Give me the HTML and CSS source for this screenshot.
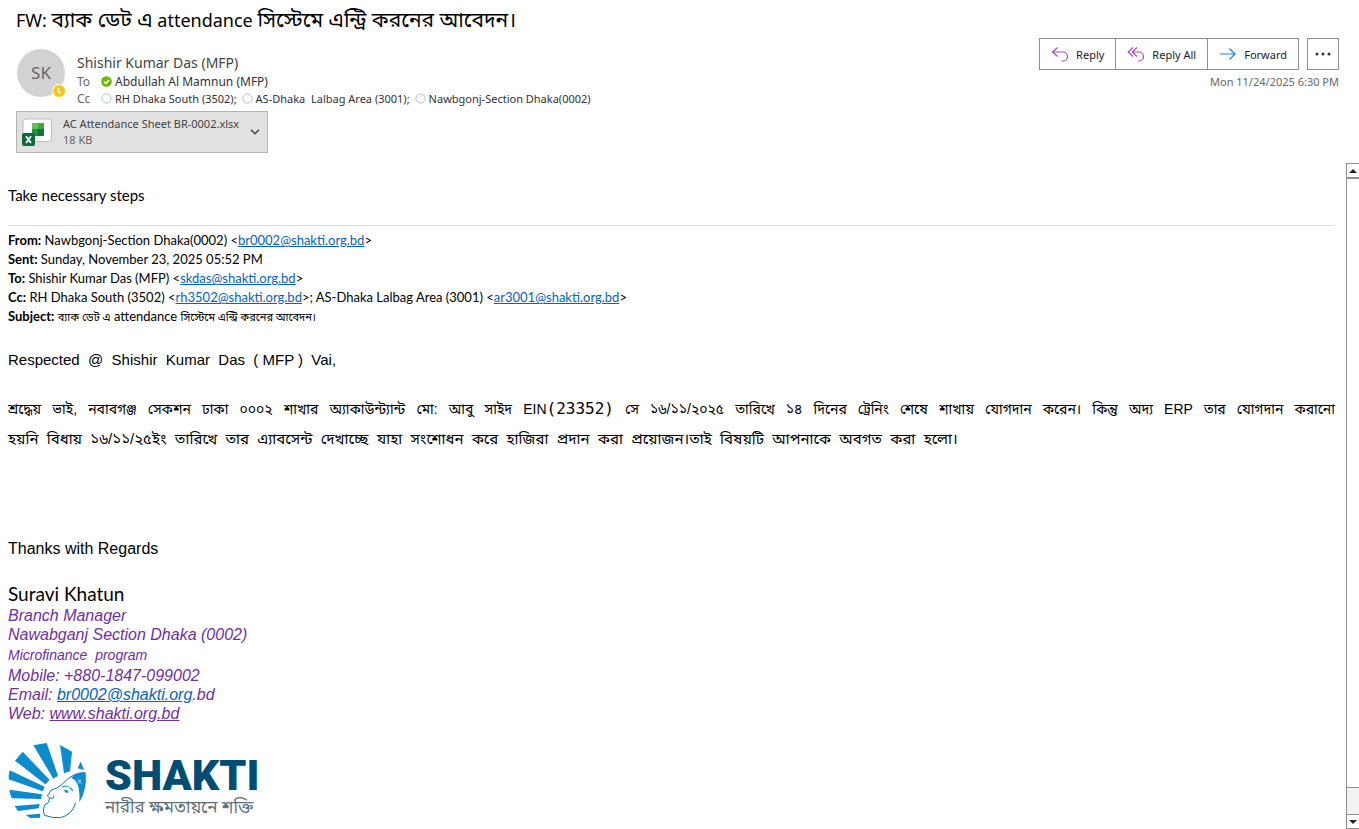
FILE: index.html
```html
<!DOCTYPE html>
<html lang="en">
<head>
<meta charset="utf-8">
<meta name="viewport" content="width=device-width, initial-scale=1">
<title>FW: ব্যাক ডেট এ attendance সিস্টেমে এন্ট্রি করনের আবেদন।</title>
<link rel="stylesheet" href="styles.css">
</head>
<body>
<header class="header">
  <h1 class="subject">FW: <span class="bn-large">ব্যাক ডেট এ</span> attendance <span class="bn-large">সিস্টেমে এন্ট্রি করনের আবেদন।</span></h1>
  <div class="envelope">
    <div class="avatar">SK
      <svg class="avatar-status" viewBox="0 0 14 14" aria-label="Away"><circle cx="7" cy="7" r="7" fill="#fff"/><circle cx="7" cy="7" r="6" fill="#fcc511"/><path d="M6.500 4v3.500l2.200 1.600" fill="none" stroke="#fff" stroke-width="1.500"/></svg>
    </div>
    <div class="people">
      <div class="sender">Shishir Kumar Das (MFP)</div>
      <div class="row"><span class="label">To</span><span class="person"><svg class="dot" viewBox="0 0 11 11"><circle cx="5.500" cy="5.500" r="5.300" fill="#6bb700"/><path d="M3 5.500l2 1.900 3.200-3.400" fill="none" stroke="#fff" stroke-width="1.600"/></svg>Abdullah Al Mamnun (MFP)</span></div>
      <div class="row"><span class="label">Cc</span><span class="person copy"><svg class="dot" viewBox="0 0 11 11"><circle cx="5.500" cy="5.500" r="4.600" fill="#fff" stroke="#a9c3d1"/></svg>RH Dhaka South (3502);</span><span class="person copy"><svg class="dot" viewBox="0 0 11 11"><circle cx="5.500" cy="5.500" r="4.600" fill="#fff" stroke="#a9c3d1"/></svg>AS-Dhaka&nbsp; Lalbag Area (3001);</span><span class="person copy"><svg class="dot" viewBox="0 0 11 11"><circle cx="5.500" cy="5.500" r="4.600" fill="#fff" stroke="#a9c3d1"/></svg>Nawbgonj-Section Dhaka(0002)</span></div>
    </div>
    <div class="side">
      <div class="actions">
        <div class="group">
          <button class="action" type="button"><svg class="action-icon reply" viewBox="0 0 18 16"><path d="M6.500 1.500L1.500 6l5 4.500M1.500 6H12a4.500 4.500 0 0 1 0 9h-1.500"/></svg>Reply</button>
          <button class="action" type="button"><svg class="action-icon reply" viewBox="0 0 18 16"><path d="M6 1.500L1.200 6 6 10.500M10 1.500L5.200 6l4.800 4.500M5.200 6H12a4.500 4.500 0 0 1 0 9h-1"/></svg>Reply All</button>
          <button class="action" type="button"><svg class="action-icon forward" viewBox="0 0 18 16"><path d="M1 8h15M10.500 2.500L16 8l-5.500 5.500"/></svg>Forward</button>
        </div>
        <button class="more" type="button" aria-label="More actions"><svg class="more-icon" viewBox="0 0 16 4"><circle cx="2" cy="2" r="1.500"/><circle cx="8" cy="2" r="1.500"/><circle cx="14" cy="2" r="1.500"/></svg></button>
      </div>
      <time class="date">Mon 11/24/2025 6:30 PM</time>
    </div>
  </div>
  <button class="attachment" type="button">
    <svg class="file-icon" viewBox="0 0 32 28"><rect x="2" y="1" width="28.500" height="22.500" rx="3" fill="#fff" stroke="#bdbdbd"/><path d="M11 5h6v6h-6z" fill="#5fc25a"/><path d="M17 5h6v6h-6z" fill="#3fa83f"/><path d="M11 11h6v7h-6z" fill="#21913f"/><path d="M17 11h6v7h-6z" fill="#14703c"/><rect x="1" y="15" width="13" height="13" rx="2" fill="#0f6b3c"/><path d="M5 18.200l5 6.800M10 18.200L5 25" stroke="#fff" stroke-width="1.900"/></svg>
    <span class="file"><span class="file-name">AC Attendance Sheet BR-0002.xlsx</span><span class="file-size">18 KB</span></span>
    <svg class="chevron" viewBox="0 0 10 6"><path d="M1 .8l4 4 4-4" fill="none" stroke="#444" stroke-width="1.500"/></svg>
  </button>
</header>
<div class="reader">
  <main class="message">
    <p class="intro">Take necessary steps</p>
    <div class="quoted">
      <div><b>From:</b> Nawbgonj-Section Dhaka(0002) &lt;<a class="link" href="mailto:br0002@shakti.org.bd">br0002@shakti.org.bd</a>&gt;</div>
      <div><b>Sent:</b> Sunday, November 23, 2025 05:52 PM</div>
      <div><b>To:</b> Shishir Kumar Das (MFP) &lt;<a class="link" href="mailto:skdas@shakti.org.bd">skdas@shakti.org.bd</a>&gt;</div>
      <div><b>Cc:</b> RH Dhaka South (3502) &lt;<a class="link" href="mailto:rh3502@shakti.org.bd">rh3502@shakti.org.bd</a>&gt;; AS-Dhaka Lalbag Area (3001) &lt;<a class="link" href="mailto:ar3001@shakti.org.bd">ar3001@shakti.org.bd</a>&gt;</div>
      <div><b>Subject:</b> <span class="bn-small">ব্যাক ডেট এ</span> attendance <span class="bn-small">সিস্টেমে এন্ট্রি করনের আবেদন।</span></div>
    </div>
    <p class="greeting">Respected  @  Shishir  Kumar  Das  ( MFP )  Vai,</p>
    <div class="letter" lang="bn">
      <p class="full">শ্রদ্ধেয় ভাই, নবাবগঞ্জ সেকশন ঢাকা ০০০২ শাখার অ্যাকাউন্ট্যান্ট মো: আবু সাইদ EIN<span class="code">(23352)</span> সে ১৬/১১/২০২৫ তারিখে ১৪ দিনের ট্রেনিং শেষে শাখায় যোগদান করেন। কিন্তু অদ্য ERP তার যোগদান করানো</p>
      <p class="spaced">হয়নি  বিধায়  ১৬/১১/২৫ইং  তারিখে  তার  এ্যাবসেন্ট  দেখাচ্ছে  যাহা  সংশোধন  করে  হাজিরা  প্রদান  করা  প্রয়োজন।তাই  বিষয়টি  আপনাকে  অবগত  করা  হলো।</p>
    </div>
    <p class="thanks">Thanks with Regards</p>
    <div class="name">Suravi Khatun</div>
    <div class="signature">
      <div>Branch Manager</div>
      <div>Nawabganj Section Dhaka (0002)</div>
      <div class="program">Microfinance&nbsp; program</div>
      <div>Mobile: +880-1847-099002</div>
      <div>Email: <a class="link" href="mailto:br0002@shakti.org.bd">br0002@shakti.org</a>.bd</div>
      <div>Web: <a class="web" href="http://www.shakti.org.bd">www.shakti.org.bd</a></div>
    </div>
    <div class="logo">
      <svg class="logo-mark" viewBox="22 36 240 234">
        <g fill="#0a8ccd"><path d="M178 45l36 20-6 59-18 6z"/><path d="M98 46l40-7 34 98-14 9z"/><path d="M66 65L43 92l91 71 13-13z"/><path d="M27 121q-4 14-3 27l102 36 6-14z"/><path d="M26 179q2 14 7 26l88 2 3-14z"/><path d="M42 228l10 15 62-8 3-13z"/><path d="M75 255l14 9 29-1v-12z"/><path d="M240 95l-9 20 19 5z"/><path d="M212 143q14-16 43-15 5 49-19 89 3-50-13-66z"/><path d="M190 181q12-6 13 6-8 6-13-6zM204 170q15 4 12 15-5-8-12-15z"/></g>
        <path d="M254 128q-36-3-71 36-14 12-31 16l-12 18 7 6-4 14-11 7-4 15 3 16q26 9 48 7 36-8 46-45M148 203q13 7 10-6M184 171q10-4 19-2" fill="none" stroke="#0a78b5" stroke-width="3"/>
        <path d="M231 148l4 12 3-12 4 15" fill="none" stroke="#b4def2" stroke-width="2"/>
      </svg>
      <div class="logo-words"><span class="logo-name">SHAKTI</span><span class="logo-tag" lang="bn">নারীর ক্ষমতায়নে শক্তি</span></div>
    </div>
  </main>
  <div class="scrollbar">
    <button class="scroll-button" type="button" aria-label="Scroll up"><svg class="arrow" viewBox="0 0 8 4"><path d="M0 4l4-4 4 4z"/></svg></button>
    <div class="thumb"></div>
    <div class="track"></div>
    <button class="scroll-button" type="button" aria-label="Scroll down"><svg class="arrow" viewBox="0 0 8 4"><path d="M0 0l4 4 4-4z"/></svg></button>
  </div>
</div>
</body>
</html>
```
FILE: styles.css
```css
* { box-sizing: border-box; }
body {
  margin: 0;
  min-height: 100vh;
  display: flex;
  flex-direction: column;
  background: #fff;
  color: #000;
  font-family: "Noto Sans", "Noto Sans Bengali", sans-serif;
}
p, h1 { margin: 0; }
button { font: inherit; padding: 0; background: #fff; }
.header { padding: 4px 20px 0 16px; }
.subject { font-size: 18px; line-height: 32px; font-weight: 400; }
.bn-large { font-size: 21px; line-height: 24px; }
.envelope { display: flex; height: 75px; }
.avatar {
  position: relative;
  width: 48px;
  height: 48px;
  margin: 13px 12px 0 1px;
  border-radius: 50%;
  background: #d2d2d2;
  color: #666;
  font-size: 17px;
  line-height: 48px;
  text-align: center;
}
.avatar-status { position: absolute; right: -1px; bottom: -1px; width: 14px; height: 14px; }
.people { flex: 1; padding-top: 17px; font-size: 12px; line-height: 17px; color: #333; }
.sender { font-size: 14px; line-height: 20px; color: #444; }
.row { display: flex; gap: 5px; }
.label { width: 19px; color: #666; }
.person { display: flex; align-items: center; gap: 3px; }
.copy { font-size: 11px; }
.dot { width: 11px; height: 11px; }
.side { display: flex; flex-direction: column; align-items: flex-end; padding-top: 2px; }
.actions { display: flex; gap: 8px; }
.group { display: flex; }
.action {
  display: flex;
  align-items: center;
  gap: 7px;
  height: 32px;
  padding: 0 11px;
  border: 1px solid #8f8f8f;
  font-size: 11px;
  color: #222;
}
.action + .action { border-left: 0; }
.action-icon { width: 18px; height: 16px; fill: none; stroke-width: 1.2; }
.reply { stroke: #b146c2; }
.forward { stroke: #1a86d0; }
.more { display: flex; align-items: center; justify-content: center; width: 32px; height: 32px; border: 1px solid #8f8f8f; }
.more-icon { width: 16px; height: 4px; fill: #333; }
.date { font-size: 11px; line-height: 24px; color: #666; }
.attachment {
  display: flex;
  align-items: center;
  width: 252px;
  height: 42px;
  padding: 0 7px 0 4px;
  border: 1px solid #b3b3b3;
  background: #e1e1e1;
  text-align: left;
}
.file-icon { width: 32px; height: 28px; }
.file { flex: 1; display: flex; flex-direction: column; padding-left: 10px; font-size: 11px; line-height: 16px; white-space: nowrap; }
.file-name { color: #444; }
.file-size { color: #666; }
.chevron { width: 10px; height: 6px; }
.reader { flex: 1; display: flex; margin-top: 10px; }
.message { flex: 1; min-width: 0; padding: 22px 11px 0 8px; font-family: Lato, "Noto Sans Bengali", sans-serif; }
.intro { font-size: 15px; line-height: 20px; padding-bottom: 20px; border-bottom: 1px solid #e1e1e1; }
.quoted { padding-top: 5px; font-size: 13px; line-height: 19px; }
.bn-small { font-size: 11px; line-height: 16px; }
.link { color: #0563c1; }
.greeting { margin-top: 24px; font-family: "Liberation Sans", sans-serif; font-size: 15px; line-height: 20px; white-space: pre-wrap; }
.letter {
  margin-top: 24px;
  font-family: "Liberation Sans", "Noto Sans Bengali", sans-serif;
  font-size: 14px;
  line-height: 30px;
}
.full { text-align: justify; text-align-last: justify; }
.code { font-family: "DejaVu Sans Mono", monospace; font-size: 16px; line-height: 20px; }
.spaced { font-size: 15px; white-space: pre-wrap; }
.thanks { margin-top: 85px; font-family: "Liberation Sans", sans-serif; font-size: 16px; line-height: 20px; }
.name { margin-top: 22px; font-size: 19px; line-height: 25px; }
.signature { color: #7030a0; font-family: "Liberation Sans", sans-serif; font-size: 16px; font-style: italic; line-height: 19px; }
.program { font-size: 14px; line-height: 22px; }
.web { color: #7030a0; }
.logo { display: flex; gap: 17px; padding-top: 19px; }
.logo-mark { width: 80px; height: 78px; }
.logo-words { display: flex; flex-direction: column; padding-top: 12px; }
.logo-name { font-family: Roboto, sans-serif; font-weight: 900; font-size: 43px; line-height: 43px; color: #004d73; }
.logo-tag { font-size: 17px; line-height: 20px; color: #5f6f7a; }
.scrollbar { display: flex; flex-direction: column; width: 13px; background: #f2f2f2; border-left: 1px solid #8f8f8f; }
.scroll-button { display: flex; align-items: center; justify-content: center; width: 100%; height: 15px; border: 0; border-top: 1px solid #8f8f8f; border-bottom: 1px solid #8f8f8f; }
.arrow { width: 8px; height: 4px; fill: #222; }
.thumb { flex: 23; background: #fff; border-top: 1px solid #8f8f8f; border-bottom: 1px solid #8f8f8f; }
.track { flex: 1; }
```
